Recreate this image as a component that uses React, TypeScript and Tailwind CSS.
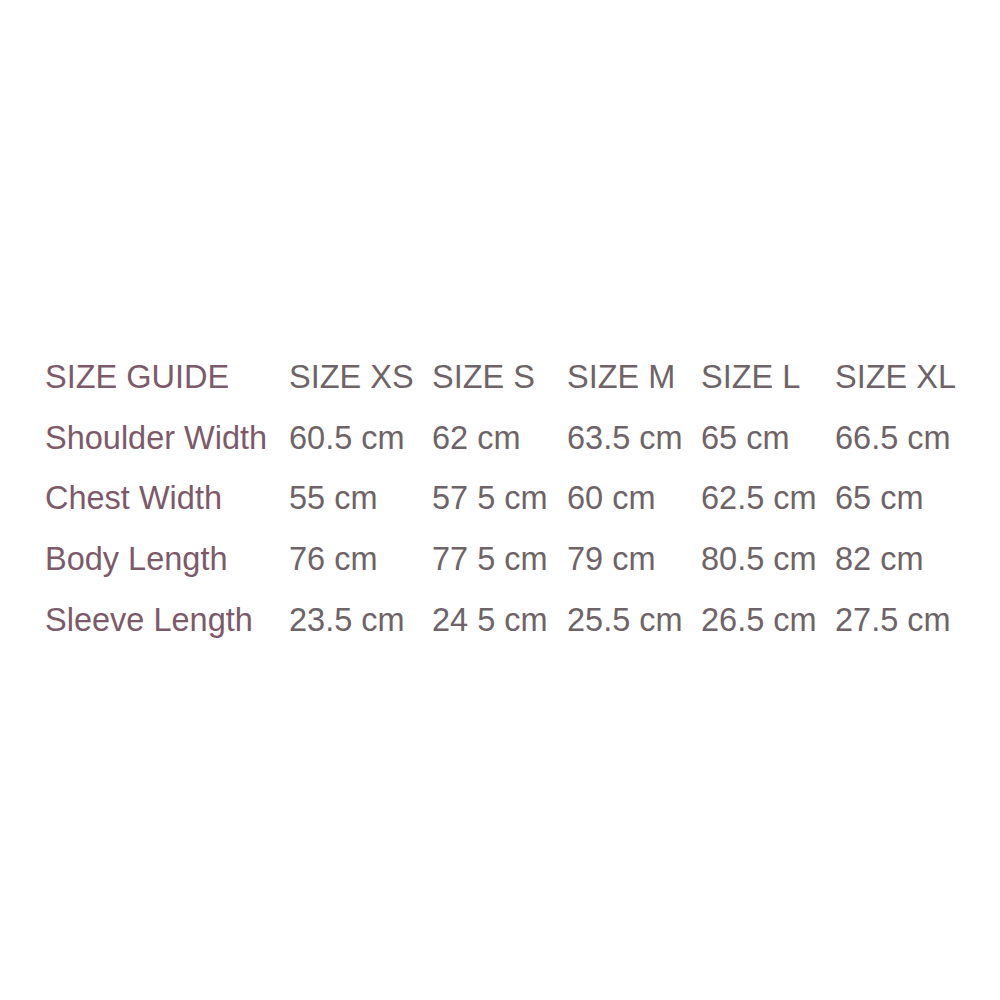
import React from "react";

const rows: string[][] = [
  ["SIZE GUIDE", "SIZE XS", "SIZE S", "SIZE M", "SIZE L", "SIZE XL"],
  ["Shoulder Width", "60.5 cm", "62 cm", "63.5 cm", "65 cm", "66.5 cm"],
  ["Chest Width", "55 cm", "57 5 cm", "60 cm", "62.5 cm", "65 cm"],
  ["Body Length", "76 cm", "77 5 cm", "79 cm", "80.5 cm", "82 cm"],
  ["Sleeve Length", "23.5 cm", "24 5 cm", "25.5 cm", "26.5 cm", "27.5 cm"],
];

export default function App() {
  return (
    <div className="w-[1000px] h-[1000px] bg-white pt-[347px] pl-[45px]" style={{ fontFamily: '"Liberation Sans", Arial, sans-serif' }}>
      <div className="grid grid-cols-[244px_143px_135px_134px_134px_auto] text-[32.5px] leading-[60.7px] text-[#76606b] whitespace-nowrap">
        {rows.map((r, i) =>
          r.map((c, j) => (
            <div key={`${i}-${j}`} className={j === 0 ? "text-[#7c5a6a]" : "text-[#6e6468]"}>
              {c}
            </div>
          ))
        )}
      </div>
    </div>
  );
}
